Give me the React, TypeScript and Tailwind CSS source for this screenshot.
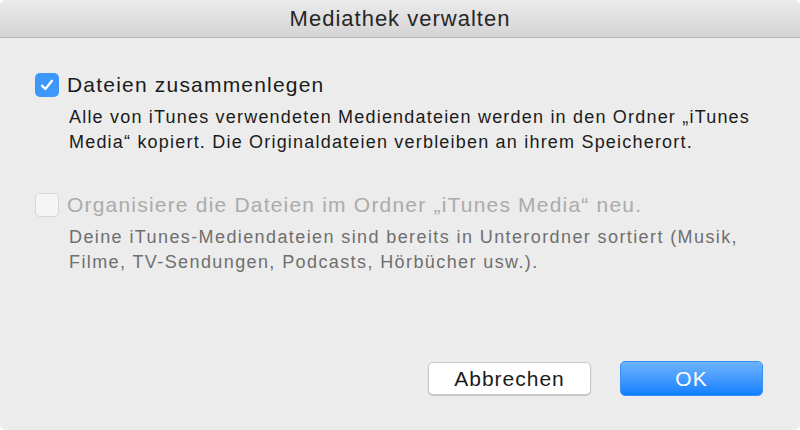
import React from 'react';

// macOS-style sheet: "Mediathek verwalten"

function Checkbox({ checked, disabled }: { checked: boolean; disabled?: boolean }) {
  if (checked) {
    return (
      <div className="w-[24px] h-[24px] shrink-0 rounded-[5px] bg-[#3d98fb] flex items-center justify-center">
        <svg width="16" height="16" viewBox="0 0 16 16" fill="none">
          <path d="M3 8.6 L6.4 12 L13 3.8" stroke="white" strokeWidth="2.3" strokeLinecap="round" strokeLinejoin="round" />
        </svg>
      </div>
    );
  }
  return (
    <div
      className={`w-[24px] h-[24px] shrink-0 rounded-[5px] border ${
        disabled ? 'border-[#d6d6d6] bg-[#f5f5f5]' : 'border-[#b5b5b5] bg-white'
      }`}
    />
  );
}

export default function App() {
  return (
    <div
      className="w-[800px] h-[430px] bg-white"
      style={{ fontFamily: '"Liberation Sans", Arial, sans-serif' }}
    >
      <div className="w-full h-full rounded-[6px] overflow-hidden bg-[#ececec] flex flex-col">
        {/* Title bar */}
        <div className="h-[38px] shrink-0 bg-gradient-to-b from-[#ebebeb] to-[#d4d4d4] border-b border-[#b9b9b9] flex items-center justify-center">
          <span className="text-[22px] text-[#262626] tracking-[1px]">Mediathek verwalten</span>
        </div>

        {/* Options */}
        <div className="flex flex-col pl-[35px] pr-[20px] pt-[35px]">
          <div className="flex items-center gap-[8px] h-[24px]">
            <Checkbox checked />
            <span className="text-[21px] tracking-[1.2px] text-[#1b1b1b]">Dateien zusammenlegen</span>
          </div>
          <p className="ml-[34px] mt-[8px] text-[18px] tracking-[1.2px] leading-[25px] text-[#1b1b1b] whitespace-nowrap">
            Alle von iTunes verwendeten Mediendateien werden in den Ordner „iTunes
            <br />
            Media“ kopiert. Die Originaldateien verbleiben an ihrem Speicherort.
          </p>

          <div className="flex items-center gap-[8px] h-[24px] mt-[38px]">
            <Checkbox checked={false} disabled />
            <span className="text-[21px] tracking-[1.2px] text-[#ababab] whitespace-nowrap">
              Organisiere die Dateien im Ordner „iTunes Media“ neu.
            </span>
          </div>
          <p className="ml-[34px] mt-[8px] text-[18px] tracking-[1.4px] leading-[25px] text-[#6f6f6f] whitespace-nowrap">
            Deine iTunes-Mediendateien sind bereits in Unterordner sortiert (Musik,
            <br />
            Filme, TV-Sendungen, Podcasts, Hörbücher usw.).
          </p>
        </div>

        {/* Buttons */}
        <div className="mt-auto flex justify-end items-center gap-[29px] pr-[37px] pb-[34px]">
          <button className="w-[163px] h-[33px] rounded-[5px] bg-white border border-[#c8c8c8] shadow-[0_1px_1px_rgba(0,0,0,0.18)] text-[21px] tracking-[1px] text-[#1b1b1b]">
            Abbrechen
          </button>
          <button className="w-[143px] h-[35px] rounded-[5px] bg-gradient-to-b from-[#6cb3fa] to-[#0a7fff] border border-[#3a8ff5] text-[21px] tracking-[1px] text-white">
            OK
          </button>
        </div>
      </div>
    </div>
  );
}
